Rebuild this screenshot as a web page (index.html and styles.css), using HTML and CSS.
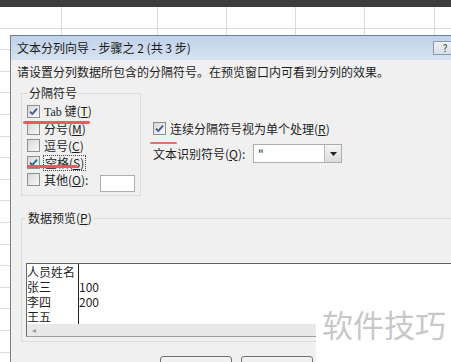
FILE: index.html
```html
<!DOCTYPE html>
<html>

<head>
  <meta charset="utf-8">
  <meta name="viewport" content="width=device-width">
  <title>文本分列向导 - 步骤之 2</title>

  <link rel="stylesheet" href="styles.css">
</head>

<body>
  <div class="sheet">
    <div class="sheet-bar"></div>
    <div class="sheet-grid"></div>
  </div>

  <div class="dialog">
    <div class="titlebar">
      <span class="title">文本分列向导 - 步骤之 2 (共 3 步)</span>
      <div class="title-buttons">
        <span class="title-btn">?</span>
        <span class="title-btn">✕</span>
      </div>
    </div>

    <div class="dialog-body">
      <p class="hint">请设置分列数据所包含的分隔符号。在预览窗口内可看到分列的效果。</p>

      <div class="options">
        <fieldset class="group delims">
          <legend>分隔符号</legend>
          <label class="check-row">
            <span class="box"><svg viewBox="0 0 11 11" width="11" height="11"><path d="M2 5.6l2.3 2.4L9 2.6" /></svg></span>
            <span><span class="latin">Tab</span> 键(<u>T</u>)</span>
          </label>
          <label class="check-row">
            <span class="box"></span>
            <span>分号(<u>M</u>)</span>
          </label>
          <label class="check-row">
            <span class="box"></span>
            <span>逗号(<u>C</u>)</span>
          </label>
          <label class="check-row">
            <span class="box"><svg viewBox="0 0 11 11" width="11" height="11"><path d="M2 5.6l2.3 2.4L9 2.6" /></svg></span>
            <span class="focused">空格(<u>S</u>)</span>
          </label>
          <label class="check-row">
            <span class="box"></span>
            <span>其他(<u>O</u>):</span>
            <span class="other-input"></span>
          </label>
        </fieldset>

        <div class="side">
          <label class="check-row">
            <span class="box"><svg viewBox="0 0 11 11" width="11" height="11"><path d="M2 5.6l2.3 2.4L9 2.6" /></svg></span>
            <span>连续分隔符号视为单个处理(<u>R</u>)</span>
          </label>
          <div class="qualifier">
            <span class="qualifier-label">文本识别符号(<u>Q</u>):</span>
            <div class="combo">
              <span class="combo-value">"</span>
              <span class="combo-arrow"><svg viewBox="0 0 7 4" width="7" height="4"><path d="M0 0h7L3.5 4z" /></svg></span>
            </div>
          </div>
        </div>
      </div>

      <fieldset class="group preview-group">
        <legend>数据预览(<u>P</u>)</legend>
        <div class="preview">
          <div class="preview-data">
            <div class="col col-name">人员姓名<br>张三<br>李四<br>王五</div>
            <div class="col"><br>100<br>200</div>
          </div>
          <div class="hscroll"><span class="scroll-arrow">◂</span></div>
        </div>
      </fieldset>

      <div class="buttons">
        <span class="btn">取消</span>
        <span class="btn">&lt; 上一步(<u>B</u>)</span>
        <span class="btn">下一步(<u>N</u>) &gt;</span>
        <span class="btn">完成(<u>F</u>)</span>
      </div>
    </div>

    <!-- hand drawn red marks -->
    <span class="mark mark-tab"></span>
    <span class="mark mark-space"></span>
    <span class="mark mark-merge"></span>
  </div>

  <div class="watermark">软件技巧</div>
</body>

</html>
```

FILE: styles.css
```css
html,
body {
  margin: 0;
  padding: 0;
  width: 100%;
  height: 100%;
  overflow: hidden;
}

body {
  font-family: "Noto Sans CJK SC", sans-serif;
  font-size: 12px;
  line-height: 14px;
  color: #1e1e1e;
  background: #fff;
}

.sheet {
  height: 100%;
}

.sheet-bar {
  height: 7px;
  background: #3d3d3d;
}

.sheet-grid {
  height: calc(100% - 7px);
  background-color: #fff;
  background-image:
    linear-gradient(#dadada, #dadada),
    linear-gradient(#dadada, #dadada),
    linear-gradient(#dadada, #dadada),
    linear-gradient(#dadada, #dadada),
    linear-gradient(#dadada, #dadada),
    linear-gradient(#dadada, #dadada),
    repeating-linear-gradient(to bottom, transparent 0 20.6px, #dcdcdc 20.6px 21.6px);
  background-size: 1px 100%, 1px 100%, 1px 100%, 1px 100%, 1px 100%, 1px 100%, 100% 100%;
  background-position: 61px 0, 157px 0, 226px 0, 295px 0, 364px 0, 434px 0, 0 0;
  background-repeat: no-repeat;
}

/* the wizard window sits on top of the sheet */
.dialog {
  position: absolute;
  left: 10px;
  top: 35px;
  width: 472px;
  height: 360px;
  box-sizing: border-box;
  background: #f0f0f0;
  border: 1px solid #6f7f92;
}

.titlebar {
  height: 24px;
  display: flex;
  align-items: center;
  padding-left: 6px;
  background: linear-gradient(#c0d2e8, #d6e2f0);
}

.title {
  color: #1a1a1a;
}

.title-buttons {
  margin-left: auto;
  align-self: flex-start;
  margin-top: 5px;
  display: flex;
}

.title-btn {
  width: 24px;
  height: 14px;
  box-sizing: border-box;
  border: 1px solid #8a99ab;
  background: linear-gradient(#eef1f5, #d9dfe6);
  font-size: 10px;
  line-height: 12px;
  text-align: center;
  color: #333;
}

.dialog-body {
  padding: 0 6px;
}

.hint {
  margin: 5px 0 0;
}

.options {
  display: flex;
  align-items: flex-start;
  margin-top: 7px;
}

.group {
  margin: 0;
  border: 1px solid #dadcde;
  box-sizing: border-box;
}

.group legend {
  padding: 0 2px;
  margin-left: 0;
}

.delims {
  width: 120px;
  margin-left: 4px;
  padding: 3px 5px 7px 5px;
}

.check-row {
  display: flex;
  align-items: center;
  gap: 4px;
  height: 17px;
}

.box {
  width: 13px;
  height: 13px;
  box-sizing: border-box;
  border: 1px solid #8e8f8f;
  background: linear-gradient(135deg, #d8d8d8, #f8f8f8);
  display: flex;
  align-items: center;
  justify-content: center;
  flex-shrink: 0;
}

.box path {
  fill: none;
  stroke: #3a5890;
  stroke-width: 1.8;
}

.latin {
  font-family: "Liberation Serif", serif;
}

.focused {
  outline: 1px dotted #444;
  padding: 0 1px;
}

.other-input {
  margin-left: auto;
  margin-top: 8px;
  width: 35px;
  height: 17px;
  box-sizing: border-box;
  border: 1px solid #abadb3;
  background: #fff;
}

.side {
  margin-left: 12px;
  padding-top: 34px;
}

.qualifier {
  display: flex;
  align-items: center;
  margin-top: 7px;
}

.qualifier-label {
  width: 100px;
}

.combo {
  display: flex;
  width: 89px;
  height: 19px;
  box-sizing: border-box;
  border: 1px solid #abadb3;
  background: #fff;
}

.combo-value {
  flex: 1;
  padding-left: 4px;
  line-height: 17px;
}

.combo-arrow {
  width: 16px;
  display: flex;
  align-items: center;
  justify-content: center;
  border-left: 1px solid #b5b8bd;
  background: linear-gradient(#f5f5f5, #dcdcdc);
}

.combo-arrow path {
  fill: #222;
}

.preview-group {
  margin: 15px 0 0 4px;
  padding: 38px 0 4px 4px;
}

.preview {
  height: 74px;
  box-sizing: border-box;
  border: 1px solid #a0a0a0;
  border-top-color: #5f5f5f;
  border-left-color: #6a6a6a;
  background: #fff;
}

.preview-data {
  display: flex;
  height: 60px;
}

.col {
  line-height: 15px;
  font-size: 12px;
}

.col-name {
  width: 52px;
  box-sizing: border-box;
  border-right: 1px solid #222;
}

.hscroll {
  height: 12px;
  background: #e8e8e8;
}

.scroll-arrow {
  display: block;
  padding-left: 5px;
  font-size: 8px;
  line-height: 12px;
  color: #9a9a9a;
}

.buttons {
  display: flex;
  justify-content: flex-end;
  gap: 9px;
  margin-top: 14px;
}

.btn {
  width: 72px;
  height: 23px;
  box-sizing: border-box;
  border: 1px solid #707070;
  border-radius: 3px;
  background: linear-gradient(#f2f2f2, #ebebeb 50%, #dddddd 50%, #cfcfcf);
  text-align: center;
  line-height: 21px;
}

.mark {
  position: absolute;
  height: 3px;
  border-radius: 2px;
  background: #e0605f;
}

.mark-tab {
  left: 12px;
  top: 85px;
  width: 67px;
}

.mark-space {
  left: 16px;
  top: 129px;
  width: 51px;
}

.mark-merge {
  left: 139px;
  top: 106px;
  width: 27px;
  height: 2px;
  background: #e4706f;
}

.watermark {
  position: absolute;
  left: 316px;
  top: 305px;
  right: 0;
  bottom: 0;
  background: #fff;
  padding-left: 6px;
  font-size: 31px;
  line-height: 37px;
  color: #c8c8c8;
}
```
